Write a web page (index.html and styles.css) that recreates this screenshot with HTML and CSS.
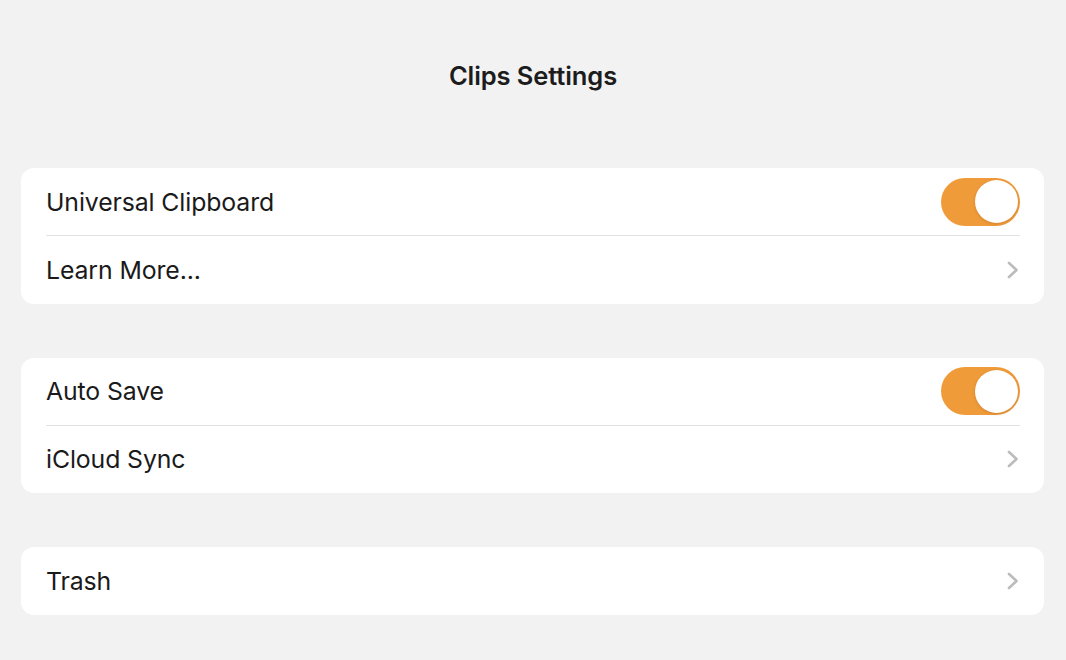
FILE: index.html
```html
<!DOCTYPE html>
<html lang="en">
<head>
<meta charset="utf-8">
<title>Clips Settings</title>
<link rel="stylesheet" href="styles.css">
</head>
<body>
<div class="page">
  <header class="header"><h1 class="title">Clips Settings</h1></header>
  <main class="groups">
    <section class="card">
      <div class="row"><div class="row-inner">
        <span class="label">Universal Clipboard</span>
        <span class="toggle on"><span class="knob"></span></span>
      </div></div>
      <div class="row"><div class="row-inner last">
        <span class="label">Learn More...</span>
        <svg class="chevron" viewBox="0 0 12 18" width="12" height="18"><polyline points="2,2 9.5,9 2,16" fill="none" stroke="#bcbcbc" stroke-width="2.6" stroke-linecap="round" stroke-linejoin="round"/></svg>
      </div></div>
    </section>
    <section class="card">
      <div class="row"><div class="row-inner">
        <span class="label">Auto Save</span>
        <span class="toggle on"><span class="knob"></span></span>
      </div></div>
      <div class="row"><div class="row-inner last">
        <span class="label">iCloud Sync</span>
        <svg class="chevron" viewBox="0 0 12 18" width="12" height="18"><polyline points="2,2 9.5,9 2,16" fill="none" stroke="#bcbcbc" stroke-width="2.6" stroke-linecap="round" stroke-linejoin="round"/></svg>
      </div></div>
    </section>
    <section class="card">
      <div class="row"><div class="row-inner last">
        <span class="label">Trash</span>
        <svg class="chevron" viewBox="0 0 12 18" width="12" height="18"><polyline points="2,2 9.5,9 2,16" fill="none" stroke="#bcbcbc" stroke-width="2.6" stroke-linecap="round" stroke-linejoin="round"/></svg>
      </div></div>
    </section>
  </main>
</div>
</body>
</html>
```
FILE: styles.css
```css
* { box-sizing: border-box; }
html, body {
  margin: 0;
  padding: 0;
  background: #f2f2f2;
}
body {
  font-family: Inter, "Noto Sans", "Liberation Sans", sans-serif;
  color: #1a1a1a;
  width: 1066px;
  height: 660px;
  overflow: hidden;
}
.header {
  padding-top: 56px;
  height: 168px;
  display: flex;
  justify-content: center;
}
.title {
  margin: 0;
  font-size: 25.5px;
  font-weight: 600;
  line-height: 40px;
  letter-spacing: -0.1px;
  color: #1c1c1c;
}
.groups {
  display: flex;
  flex-direction: column;
  gap: 54px;
  padding: 0 22px 0 21px;
}
.card {
  background: #ffffff;
  border-radius: 13px;
  display: flex;
  flex-direction: column;
}
.row {
  padding: 0 24px 0 25px;
}
.row-inner {
  height: 68px;
  display: flex;
  align-items: center;
  justify-content: space-between;
  border-bottom: 1px solid #e2e2e2;
}
.row-inner.last {
  border-bottom: none;
  height: 67.5px;
}
.label {
  font-size: 24.8px;
  letter-spacing: -0.1px;
  padding-top: 0;
}
.toggle {
  width: 79px;
  height: 48px;
  border-radius: 24px;
  background: #f09b3a;
  display: flex;
  align-items: center;
  justify-content: flex-end;
  padding: 0 2px;
}
.knob {
  width: 43px;
  height: 43px;
  border-radius: 50%;
  background: #ffffff;
  box-shadow: 0 1px 3px rgba(120, 60, 0, 0.25);
}
.chevron {
  margin-right: 1px;
  display: block;
}
```
